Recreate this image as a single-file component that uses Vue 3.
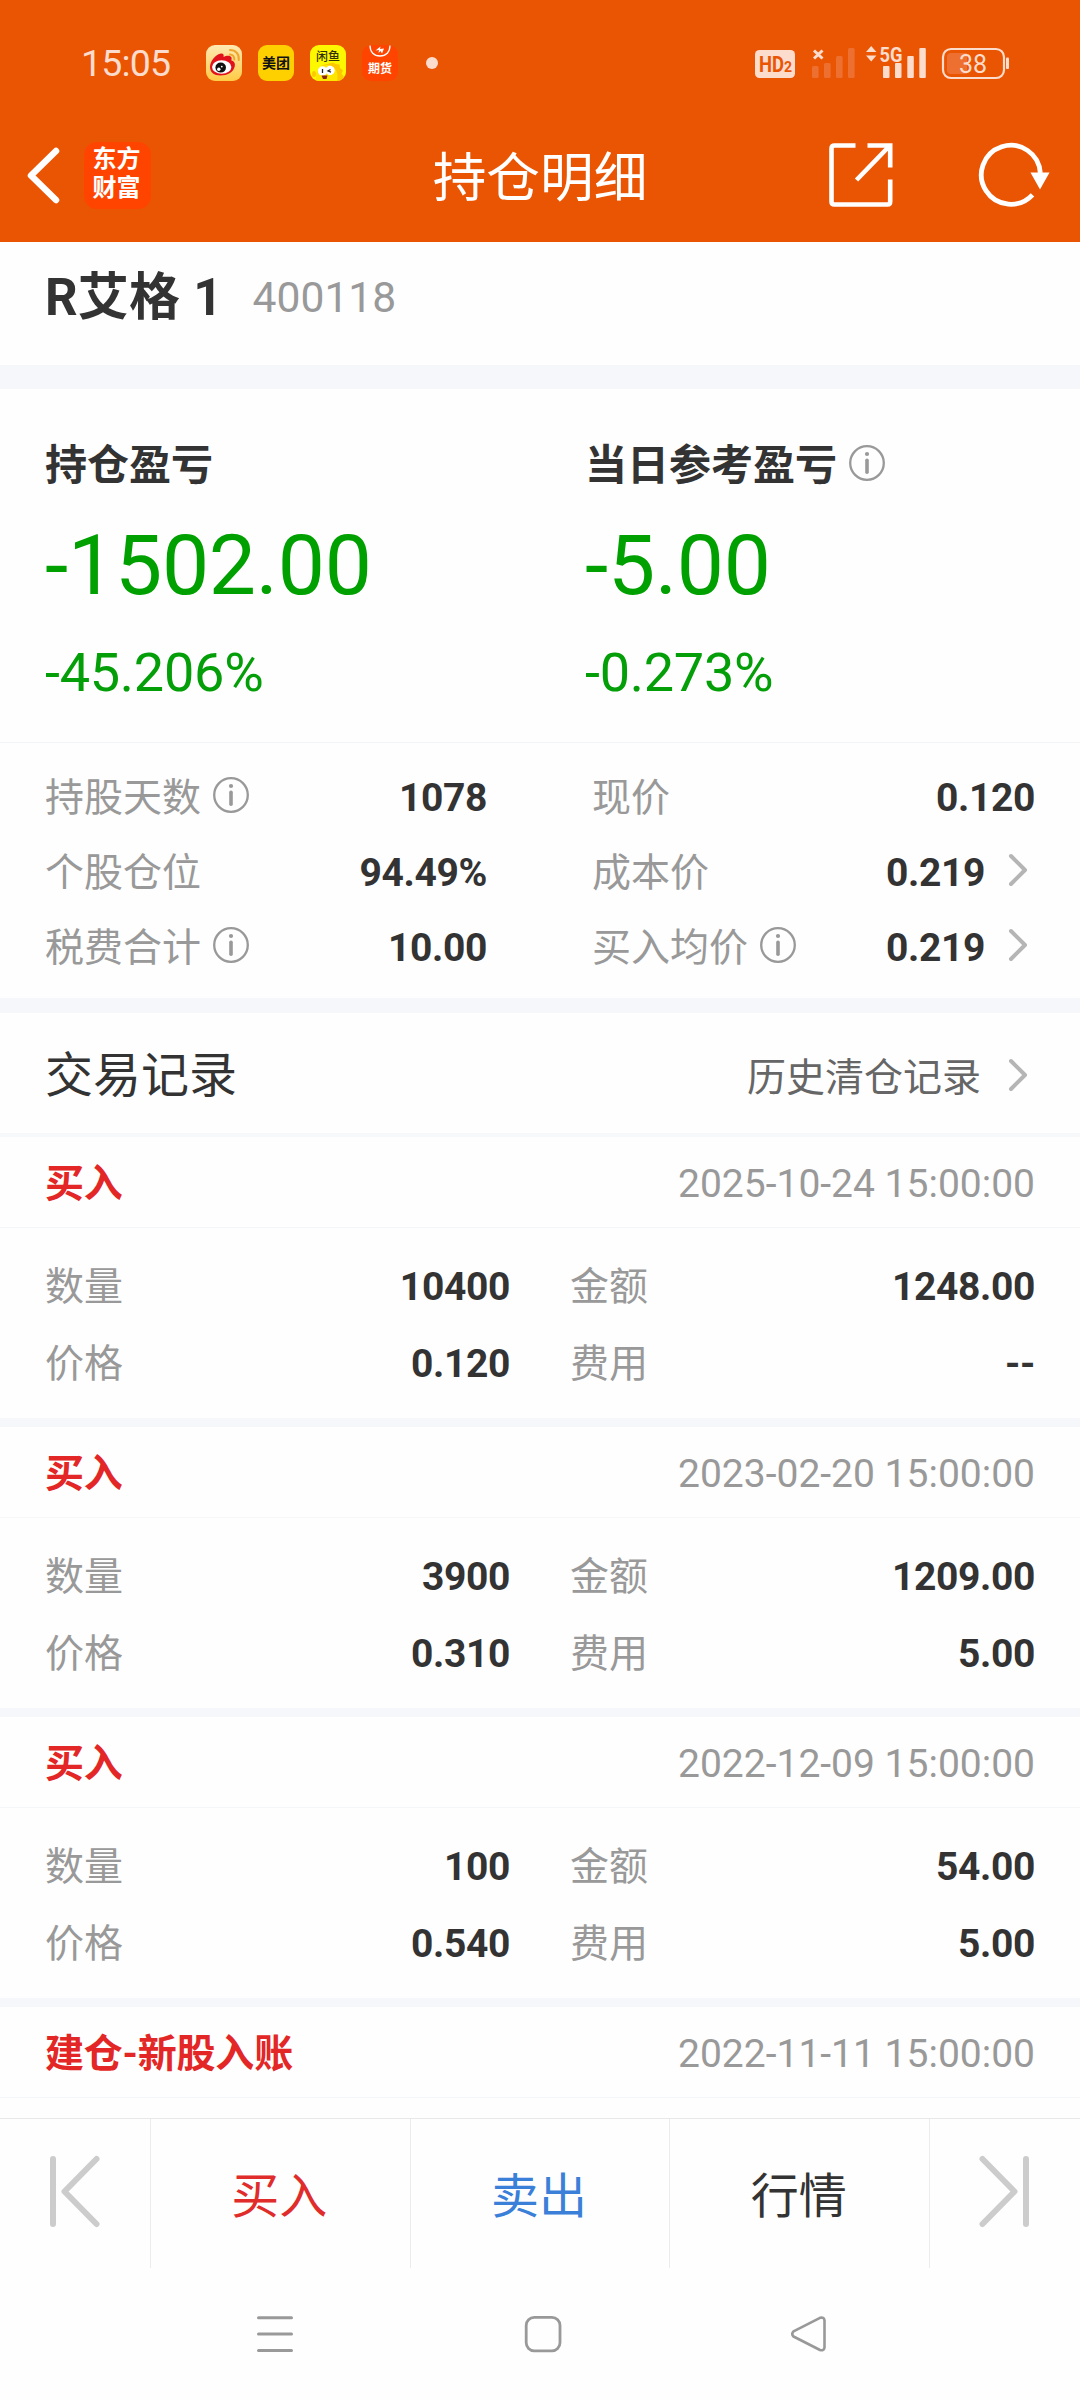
<script setup>
import { h } from 'vue'

const InfoIcon = () =>
  h('svg', { width: 36, height: 36, viewBox: '0 0 36 36', fill: 'none', stroke: '#999', style: 'display:block;flex:none' }, [
    h('circle', { cx: 18, cy: 18, r: 16.8, 'stroke-width': 2.3 }),
    h('circle', { cx: 18, cy: 9, r: 2.1, fill: '#999', stroke: 'none' }),
    h('path', { d: 'M18 15.2v12', 'stroke-width': 3.6, 'stroke-linecap': 'round' })
  ])

const Chevron = () =>
  h('svg', { width: 20, height: 34, viewBox: '0 0 20 34', fill: 'none', stroke: '#b5b5b5', 'stroke-width': 4, 'stroke-linecap': 'round', 'stroke-linejoin': 'round', style: 'display:block;flex:none' }, [
    h('path', { d: 'M3 3L17 17L3 31' })
  ])

const profits = [
  { title: '持仓盈亏', value: '-1502.00', rate: '-45.206%' },
  { title: '当日参考盈亏', value: '-5.00', rate: '-0.273%', info: true }
]

const details = [
  [
    { label: '持股天数', value: '1078', info: true },
    { label: '个股仓位', value: '94.49%' },
    { label: '税费合计', value: '10.00', info: true }
  ],
  [
    { label: '现价', value: '0.120' },
    { label: '成本价', value: '0.219', link: true },
    { label: '买入均价', value: '0.219', info: true, link: true }
  ]
]

const records = [
  { type: '买入', time: '2025-10-24 15:00:00', count: '10400', amount: '1248.00', price: '0.120', fee: '--' },
  { type: '买入', time: '2023-02-20 15:00:00', count: '3900', amount: '1209.00', price: '0.310', fee: '5.00' },
  { type: '买入', time: '2022-12-09 15:00:00', count: '100', amount: '54.00', price: '0.540', fee: '5.00' },
  { type: '建仓-新股入账', time: '2022-11-11 15:00:00' }
]
</script>

<template>
  <div class="screen">
    <header class="header">
      <div class="status">
        <span class="clock">15:05</span>
        <div class="apps">
          <svg width="36" height="36" viewBox="0 0 36 36">
            <defs>
              <linearGradient id="wb" x1="0" y1="0" x2="0" y2="1">
                <stop offset="0" stop-color="#ffe9b4" />
                <stop offset="1" stop-color="#ffcb45" />
              </linearGradient>
            </defs>
            <rect width="36" height="36" rx="9" fill="url(#wb)" />
            <path d="M4 22C4 16 10 9 15 8.500C17.500 8.300 18 10 17.600 12C20 10.500 24.500 10 25.500 12.500C26 14 25 15.200 25.500 15.600C28 16.300 29.500 18 28.700 21.500C27.400 27.500 21 30.500 14.500 30.500C8 30.500 4 27 4 22Z" fill="#e2121c" />
            <ellipse cx="15.700" cy="22" rx="9.700" ry="6.700" fill="#fff" />
            <ellipse cx="14.700" cy="22.600" rx="5.300" ry="5" fill="#111" />
            <circle cx="12.800" cy="24.300" r="1.700" fill="#fff" />
            <circle cx="15.800" cy="21.600" r=".9" fill="#fff" />
            <path d="M24 9.500c2.800 0 4.500 2 4.300 5M24 5c5.500 0 9.500 4 8.700 10" fill="none" stroke="#f0a52c" stroke-width="2" stroke-linecap="round" />
          </svg>
          <svg width="36" height="36" viewBox="0 0 36 36">
            <rect width="36" height="36" rx="9" fill="#ffd000" />
            <text x="18" y="23.300" text-anchor="middle" class="cjk" font-size="14" fill="#111">美团</text>
          </svg>
          <svg width="36" height="36" viewBox="0 0 36 36">
            <defs><clipPath id="xy"><rect width="36" height="36" rx="9" /></clipPath></defs>
            <g clip-path="url(#xy)">
              <rect width="36" height="36" fill="#fdf800" />
              <path d="M7 36C5 27 9 20 17 19L23 17.500L26 19L29.500 19.500L30 23L33 25.500L31.500 28.500L34 32L32 36Z" fill="#fdc800" />
              <path d="M6 36C5 27 9 20 17 20C25 20 29 27 27 36Z" fill="#ffe600" />
              <ellipse cx="4" cy="29" rx="2" ry="3" fill="#fdc800" />
              <circle cx="12.500" cy="26" r="4.700" fill="#fff" />
              <circle cx="20" cy="25.500" r="4.700" fill="#fff" />
              <path d="M12.500 24v4M20.500 24.500l-2.500 1.500l3 1.200" fill="none" stroke="#222" stroke-width="1.300" />
              <path d="M11.500 30.500h6l-1 3.500h-3.500z" fill="#8c2410" />
            </g>
            <text x="18" y="15.500" text-anchor="middle" class="cjk medium" font-size="12" fill="#333000">闲鱼</text>
          </svg>
          <svg width="36" height="36" viewBox="0 0 36 36">
            <rect width="36" height="36" rx="9" fill="#ff4400" />
            <path d="M8 0.500C8 7 12 11 18 11S28 7 28 .5" fill="none" stroke="#fff" stroke-width="1.300" />
            <path d="M13.500 5.500L18.500 1.500L18 4L22 3.500L20 8.500L18.500 6L16.500 8L17 5Z" fill="#fff" />
            <text x="18" y="28.300" text-anchor="middle" class="cjk" font-size="12" fill="#fff">期货</text>
          </svg>
        </div>
        <i class="dot"></i>
        <svg class="signals" width="256" height="46" viewBox="755 39 256 46" fill="#fcdccc">
          <rect x="755" y="49" width="40" height="28" rx="4.500" />
          <text x="759" y="70.500" font-size="22" font-weight="700" fill="#ea5504" textLength="25" lengthAdjust="spacingAndGlyphs">HD</text>
          <text x="784" y="71" font-size="14" font-weight="700" fill="#ea5504">2</text>
          <path d="M814 49.500l8.500 8M822.500 49.500l-8.500 8" stroke="#fcdccc" stroke-width="3" />
          <g fill="#ee7030">
            <rect x="812" y="65" width="6.600" height="12" rx="1.500" />
            <rect x="824" y="62" width="6.600" height="15" rx="1.500" />
            <rect x="836" y="55" width="6.600" height="22" rx="1.500" />
            <rect x="848" y="47" width="6.600" height="30" rx="1.500" />
          </g>
          <path d="M866 51l5.200-6l5.200 6zM866 54.500l5.200 6l5.200-6z" />
          <text x="879.500" y="60.500" font-size="21" font-weight="700" textLength="23" lengthAdjust="spacingAndGlyphs">5G</text>
          <rect x="883" y="65" width="6.500" height="12" rx="1" />
          <rect x="895" y="62" width="6.500" height="15" rx="1" />
          <rect x="907.300" y="55" width="6.500" height="22" rx="1" />
          <rect x="919.300" y="47" width="6.500" height="30" rx="1" />
          <rect x="943" y="48" width="61" height="29" rx="8" fill="none" stroke="#fcdccc" stroke-width="2.200" />
          <path d="M951 52h16v21h-16a4 4 0 0 1-4-4v-13a4 4 0 0 1 4-4z" fill="#ee7030" />
          <rect x="1006" y="56.500" width="3" height="11.500" rx="1" />
          <text x="973" y="71.500" font-size="25" text-anchor="middle">38</text>
        </svg>
      </div>
      <div class="titlebar">
        <div class="side">
          <svg class="back" width="36" height="60" viewBox="0 0 36 60" fill="none" stroke="#fff" stroke-width="6.500" stroke-linecap="round" stroke-linejoin="round">
            <path d="M31 6L6 30.500L31 55" />
          </svg>
          <div class="logo"><span>东方</span><span>财富</span></div>
        </div>
        <h1>持仓明细</h1>
        <div class="side tools">
          <svg width="64" height="64" viewBox="0 0 64 64" fill="none" stroke="#fff" stroke-width="4.600">
            <path d="M26.500 2.500H5.500Q2.500 2.500 2.500 5.500V58.500Q2.500 61.500 5.500 61.500H58.500Q61.200 61.500 61.200 58.500V36.500M38.500 2.500H61.200V24.500M60 3.500L27.500 37" />
          </svg>
          <svg width="74" height="66" viewBox="978 141 74 66">
            <path d="M1040.300 172A29.500 29.500 0 1 0 1032.500 193.800" fill="none" stroke="#fff" stroke-width="4.800" />
            <path d="M1030.500 171.500h19l-9.500 17z" fill="#fff" />
          </svg>
        </div>
      </div>
    </header>

    <main>
      <section class="stock">
        <strong>R艾格 1</strong>
        <span>400118</span>
      </section>

      <section class="profits">
        <div v-for="p in profits" :key="p.title" class="profit">
          <div class="profit-title">{{ p.title }}<InfoIcon v-if="p.info" class="raised" /></div>
          <div class="profit-value">{{ p.value }}</div>
          <div class="profit-rate">{{ p.rate }}</div>
        </div>
      </section>

      <section class="details">
        <div v-for="(col, i) in details" :key="i" class="detail-col">
          <div v-for="d in col" :key="d.label" class="detail">
            <span class="label">{{ d.label }}</span>
            <InfoIcon v-if="d.info" class="raised" />
            <b>{{ d.value }}</b>
            <Chevron v-if="d.link" class="raised chevron" />
          </div>
        </div>
      </section>

      <section class="records-head">
        <h2>交易记录</h2>
        <span>历史清仓记录</span>
        <Chevron class="raised chevron" />
      </section>

      <section class="records">
        <article v-for="r in records" :key="r.time" class="record">
          <div class="record-head"><b>{{ r.type }}</b><time>{{ r.time }}</time></div>
          <div v-if="r.count" class="record-body">
            <div class="cell"><span>数量</span><b>{{ r.count }}</b></div>
            <div class="cell"><span>金额</span><b>{{ r.amount }}</b></div>
            <div class="cell"><span>价格</span><b>{{ r.price }}</b></div>
            <div class="cell"><span>费用</span><b>{{ r.fee }}</b></div>
          </div>
        </article>
      </section>
    </main>

    <nav class="actions">
      <div class="step">
        <svg width="54" height="74" viewBox="0 0 54 74" fill="none" stroke="#ccc" stroke-width="6" stroke-linecap="round" stroke-linejoin="round">
          <path d="M5 5V70M48.500 5L16.500 37.500L48.500 70" />
        </svg>
      </div>
      <div class="action buy">买入</div>
      <div class="action sell">卖出</div>
      <div class="action">行情</div>
      <div class="step">
        <svg width="54" height="74" viewBox="0 0 54 74" fill="none" stroke="#ccc" stroke-width="6" stroke-linecap="round" stroke-linejoin="round">
          <path d="M49 5V70M5.500 5L37.500 37.500L5.500 70" />
        </svg>
      </div>
    </nav>

    <footer class="system">
      <svg width="38" height="38" viewBox="0 0 38 38" stroke="#999" stroke-width="3" stroke-linecap="round">
        <path d="M2.500 2.700h33M2.500 19h33M2.500 35.500h33" />
      </svg>
      <svg width="38" height="38" viewBox="0 0 38 38" fill="none" stroke="#999" stroke-width="2.800">
        <rect x="2.200" y="2.400" width="33.800" height="33.400" rx="8" />
      </svg>
      <svg class="nav-back" width="38" height="38" viewBox="0 0 38 38" fill="none" stroke="#999" stroke-width="2.600" stroke-linejoin="round">
        <path d="M30 2.800L3.500 16.300Q1 19 3.500 21.500L30 35Q34 36 34.500 32.500V5.500Q34 1.800 30 2.800Z" />
      </svg>
    </footer>
  </div>
</template>

<style>
body { margin: 0; background: #fefefe; }
</style>

<style scoped>
.screen {
  width: 1080px;
  height: 2400px;
  overflow: hidden;
  display: flex;
  flex-direction: column;
  background: #fefefe;
  color: #333;
  font-family: Roboto, "Noto Sans CJK SC", sans-serif;
  font-size: 39px;
}
h1, h2 { margin: 0; font-weight: 400; }
.header { flex: none; height: 242px; background: #ea5504; color: #fff; }
.status { height: 125px; display: flex; align-items: center; padding-left: 81px; box-sizing: border-box; color: #fcdccc; }
.clock { width: 125px; font-size: 37.5px; letter-spacing: -0.8px; }
.apps { display: flex; gap: 16px; }
.apps svg, .signals { display: block; }
.cjk { font-family: "Noto Sans CJK SC", sans-serif; font-weight: 700; }
.medium { font-weight: 500; }
.dot { width: 12px; height: 12px; border-radius: 50%; background: #fcdccc; margin-left: 28px; }
.signals { margin-left: 317px; }
.titlebar { height: 100px; display: flex; align-items: center; padding: 0 28px 0 25px; }
.side { flex: 1; display: flex; align-items: center; }
.logo {
  width: 67px; height: 67px; margin-left: 23px; border-radius: 13px; background: #ff4400;
  display: flex; flex-direction: column; align-items: center; justify-content: center;
  box-sizing: border-box; padding: 0 2px 2px 0;
  font: 700 24px/29px Roboto, "Noto Sans CJK SC", sans-serif;
}
h1 { font-size: 53.7px; line-height: 100px; padding: 8px 0 0 3px; }
.tools { justify-content: flex-end; gap: 85px; }

main { flex: none; height: 1876px; overflow: hidden; }
.stock { height: 123px; box-sizing: border-box; padding: 0 45px 12px; display: flex; align-items: center; }
.stock strong { font-size: 51px; line-height: 60px; letter-spacing: 0.2px; }
.stock span { font-size: 42.6px; line-height: 60px; color: #999; margin: 0 0 2px 30px; }
.profits { height: 353px; border-top: 24px solid #f5f7fa; border-bottom: 1px solid #f3f4f5; display: flex; }
.profit { flex: 1; padding: 47px 0 0 45px; }
.profit-title { display: flex; align-items: center; gap: 12px; font-size: 42px; line-height: 60px; font-weight: 700; }
.profit-value { margin-top: 20px; font-size: 84px; line-height: 100px; letter-spacing: -0.25px; color: #00a000; }
.profit-rate { margin-top: 27px; font-size: 54px; line-height: 60px; letter-spacing: -0.25px; color: #049e08; }
.raised { margin-bottom: 6px; }
.details { height: 255px; box-sizing: border-box; padding: 17px 45px 0; display: flex; justify-content: space-between; }
.detail-col { width: 442px; }
.detail-col + .detail-col { width: 443px; }
.detail { height: 75px; display: flex; align-items: center; line-height: 60px; }
.detail .raised { margin-left: 12px; }
.detail b { margin-left: auto; letter-spacing: -0.35px; }
.label { color: #999; }
.chevron { margin-left: 27px; margin-right: 7px; }
.detail .chevron { margin-left: 23px; }
.records-head {
  height: 120px; padding: 0 45px; display: flex; align-items: center;
  border-top: 15px solid #f5f7fa; border-bottom: 4px solid #f6f8f9;
}
.records-head h2 { font-size: 48px; line-height: 60px; padding-top: 5px; margin-right: auto; }
.records-head span { color: #666; line-height: 60px; padding-top: 10px; }
.records-head .chevron { margin-bottom: 0; margin-top: 4px; }
.record { border-bottom: 9px solid #f6f7fa; }
.record:last-child { border-bottom: 0; }
.record-head {
  height: 86px; padding: 4px 45px 0; display: flex; align-items: center; justify-content: space-between;
  border-bottom: 1px solid #f5f6f7; line-height: 60px;
}
.record-head b { color: #e32626; letter-spacing: -0.2px; }
.record-head time { color: #999; }
.record-body {
  height: 170px; padding: 20px 45px 0; display: grid; grid-template-columns: 465px 465px; column-gap: 60px;
  grid-auto-rows: 77px; line-height: 60px;
}
.cell { display: flex; align-items: center; justify-content: space-between; }
.cell span { color: #999; }
.cell b { letter-spacing: -0.35px; }

.actions { flex: none; height: 149px; border-top: 1px solid #e8e8e8; display: flex; }
.step { width: 150px; display: flex; align-items: center; justify-content: center; box-sizing: border-box; padding-bottom: 5px; }
.action { flex: 1; border-left: 1px solid #ececec; font-size: 48px; line-height: 155px; text-align: center; padding-right: 2px; }
.action + .step { border-left: 1px solid #ececec; width: 151px; padding-right: 2px; }
.buy { color: #e02c2a; }
.sell { color: #3a80d8; }
.system { height: 132px; display: flex; align-items: center; gap: 230px; padding-left: 256px; }
.nav-back { margin-left: -2px; }
</style>
